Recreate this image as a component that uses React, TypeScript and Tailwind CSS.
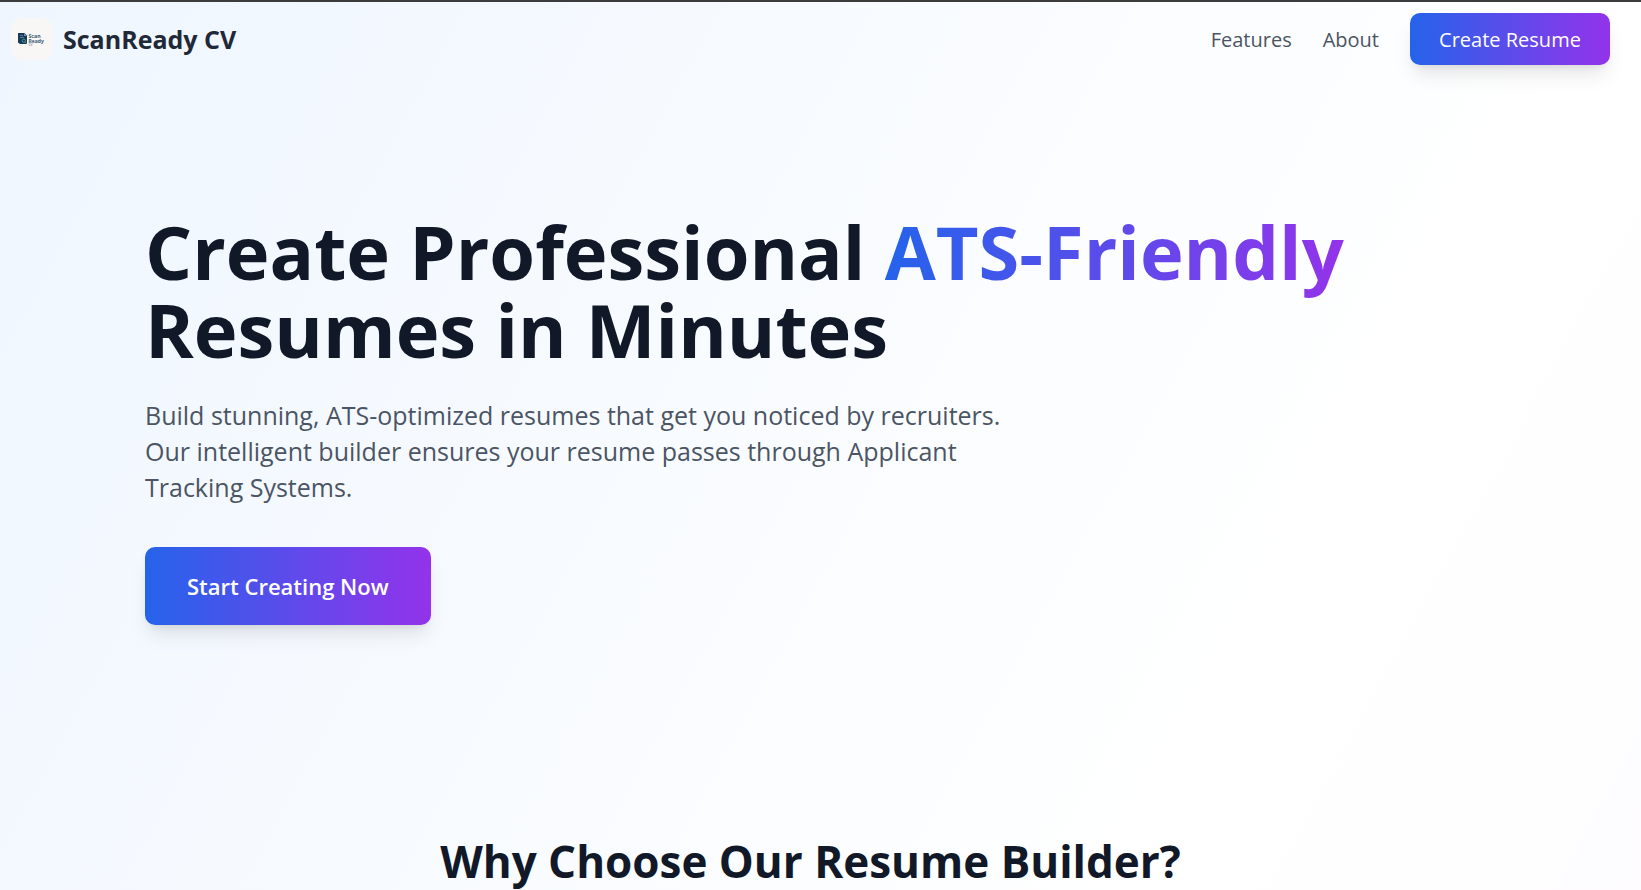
const brandGradient = "bg-linear-to-r/srgb from-[#2563eb] to-[#9333ea]";
const raised = "rounded-[10px] text-white shadow-[0_13px_20px_-4px_rgba(0,0,0,0.1),0_5px_8px_-5px_rgba(0,0,0,0.1)]";

function Logo() {
  return (
    <svg viewBox="0 0 42 42" className="size-[42px] rounded-xl bg-[#f8f7f5]" role="img" aria-label="ScanReady CV logo">
      <path d="M7 15h6.5l2.500 2.500V26H9l-2-1.500z" fill="#173a56" />
      <path d="M13 15v3h3z" fill="#7690a3" />
      <path d="M9 17.500h3M9 19.500h4" stroke="#7e97a8" strokeWidth="0.700" />
      <circle cx="12.800" cy="22.800" r="1.600" fill="none" stroke="#4f9c8a" strokeWidth="0.900" />
      <path d="m14 24 1.800 1.800" stroke="#4f9c8a" strokeWidth="0.900" />
      <g fill="#3c5b72" fontFamily="Open Sans, sans-serif" fontWeight="700">
        <text x="17.500" y="20" fontSize="5.200">Scan</text>
        <text x="17.500" y="24.800" fontSize="5">Ready</text>
        <text x="17.500" y="28" fontSize="3" fill="#8a9eac">CV</text>
      </g>
    </svg>
  );
}

export default function App() {
  return (
    <div className="min-h-screen border-t-2 border-[#3c3c3c] bg-linear-to-br/srgb from-[#eff6ff] via-white via-50% to-[#faf5ff] bg-[length:100%_3000px] font-['Open_Sans','Noto_Sans',sans-serif] text-[#111827]">
      <header className="flex items-center justify-between pt-[11px] pr-[31px] pl-[11px]">
        <a href="#home" className="flex items-center gap-[10px]">
          <Logo />
          <span className="text-[25px] leading-9 font-bold text-[#1f2937]">ScanReady CV</span>
        </a>
        <nav className="flex items-center gap-[31px] text-[20px] leading-[31px] text-[#4b5563]">
          <a href="#features">Features</a>
          <a href="#about">About</a>
          <button type="button" className={`${brandGradient} ${raised} h-[52px] w-[200px]`}>
            Create Resume
          </button>
        </nav>
      </header>

      <main>
        <section className="px-[145px] pt-[148px]">
          <h1 className="text-[74px] leading-[78px] font-bold">
            Create Professional{" "}
            <span className={`${brandGradient} bg-clip-text text-transparent`}>ATS-Friendly</span>
            <br />
            Resumes in Minutes
          </h1>
          <p className="mt-[28px] max-w-[874px] text-[25px] leading-9 text-[#4b5563]">
            Build stunning, ATS-optimized resumes that get you noticed by recruiters. Our intelligent builder ensures
            your resume passes through Applicant Tracking Systems.
          </p>
          <button type="button" className={`${brandGradient} ${raised} mt-[42px] h-[78px] px-[42px] text-[22px] font-semibold`}>
            Start Creating Now
          </button>
        </section>

        <section id="features" className="pt-[210px] pr-[20px]">
          <h2 className="text-center text-[44px] leading-[52px] font-bold">Why Choose Our Resume Builder?</h2>
        </section>
      </main>
    </div>
  );
}
